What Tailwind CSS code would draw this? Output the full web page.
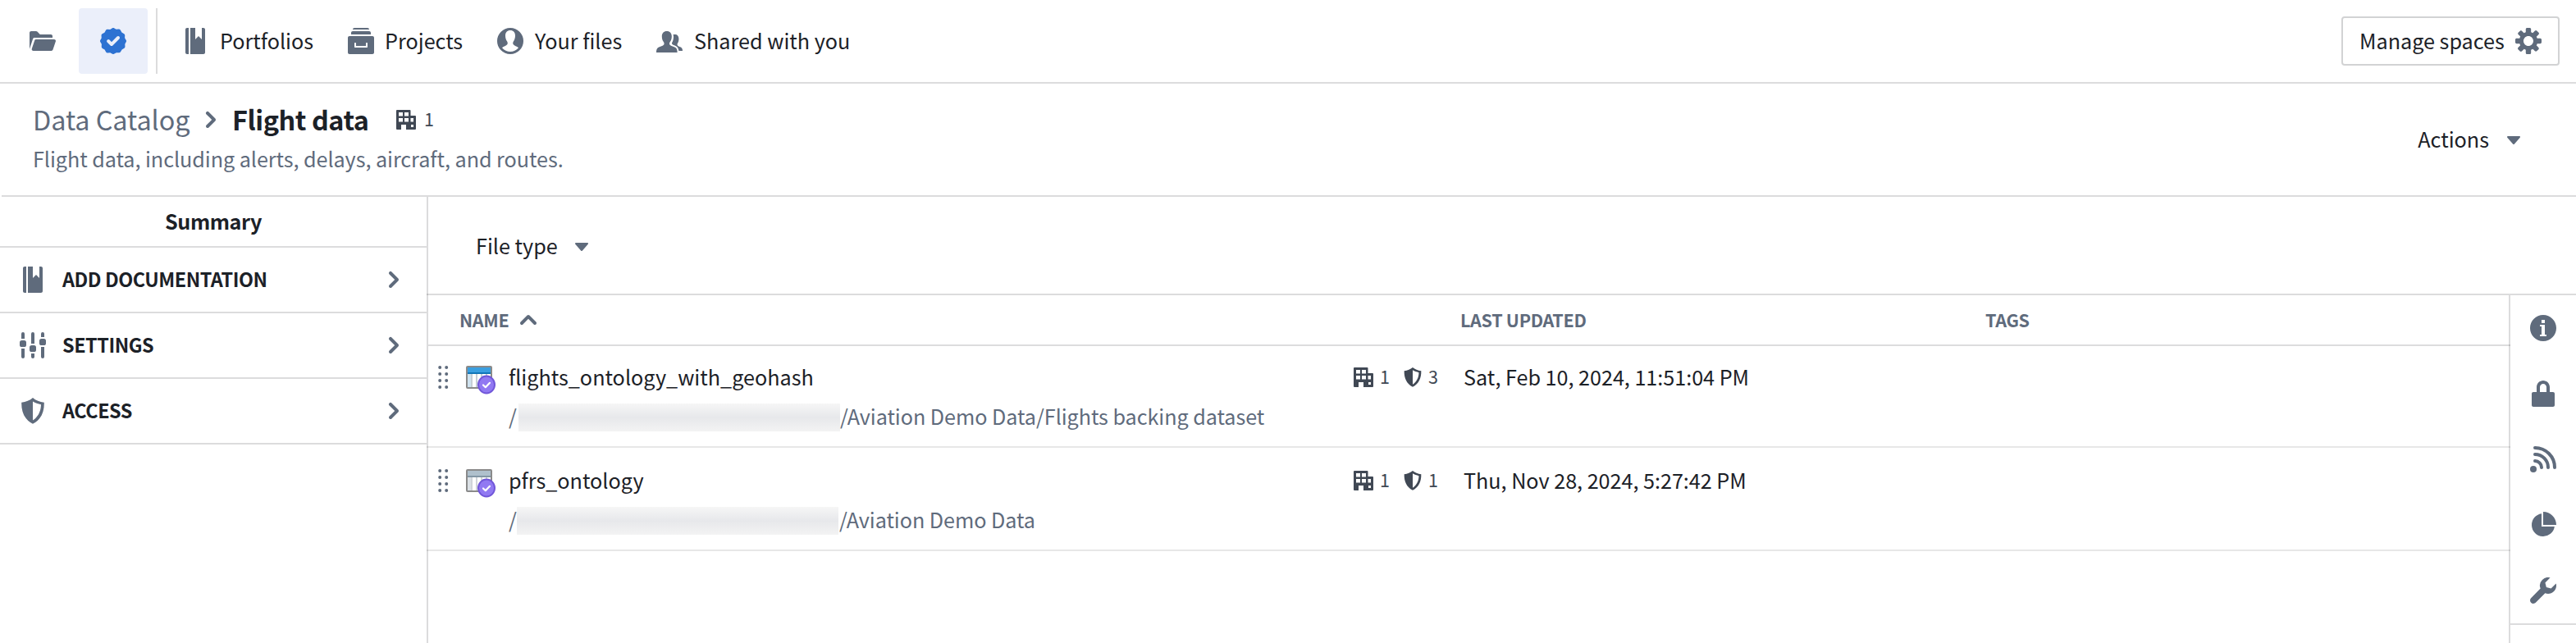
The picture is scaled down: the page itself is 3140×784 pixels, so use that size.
<!DOCTYPE html>
<html lang="en">
  <head>
    <meta charset="UTF-8" />
    <meta name="viewport" content="width=device-width, initial-scale=1.0" />
    <title>Flight data - Data Catalog</title>
    <script src="https://cdn.jsdelivr.net/npm/@tailwindcss/browser@4"></script>
  </head>
  <body
    class="bg-white text-[#1c2127] font-['Noto_Sans_CJK_SC','Noto_Sans',sans-serif] text-[25.2px] leading-8 whitespace-nowrap"
  >
    <!-- Shared icons -->
    <svg class="hidden">
      <symbol id="book" viewBox="0 0 16 16">
        <path d="M2 1v14c0 .55.45 1 1 1h1V0H3c-.55 0-1 .45-1 1zm11-1h-1v7l-2-2-2 2V0H5v16h8c.55 0 1-.45 1-1V1c0-.55-.45-1-1-1z" />
      </symbol>
      <symbol id="chevron-right" viewBox="0 0 16 16">
        <path d="M10.71 7.29l-4-4a1.003 1.003 0 00-1.42 1.42L8.59 8 5.3 11.29c-.19.18-.3.43-.3.71a1.003 1.003 0 001.71.71l4-4c.18-.18.29-.43.29-.71 0-.28-.11-.53-.29-.71z" />
      </symbol>
      <symbol id="caret-down" viewBox="0 0 16 16">
        <path d="M12 6.5c0-.28-.22-.5-.5-.5h-7a.495.495 0 00-.37.83l3.5 4c.09.1.22.17.37.17s.28-.07.37-.17l3.5-4c.08-.09.13-.2.13-.33z" />
      </symbol>
      <symbol id="shield" viewBox="0 0 16 16">
        <path fill-rule="evenodd" d="M8 0C6.2 1.6 3.8 2.5 1.1 2.9 1 8.8 3 13.3 8 15.9c5-2.6 7-7.1 6.9-13C12.2 2.5 9.8 1.6 8 0zm0 2.2c1.5.9 3.2 1.5 5 1.9-.1 4.2-1.7 7.4-5 9.7z" />
      </symbol>
      <symbol id="office" viewBox="0 0 24 24">
        <path fill-rule="evenodd" d="M1 0h15.500a1 1 0 011 1v6H23a1 1 0 011 1v15a1 1 0 01-1 1H12v-6H6v6H1a1 1 0 01-1-1V1a1 1 0 011-1zM3 3v4.500h5V3zm7 0v4.500h5V3zM3 10v4.500h5V10zm7 0v4.500h5V10zm7.500 0v4.500H21V10zm.5 8v3h3v-3z" />
      </symbol>
      <symbol id="drag" viewBox="0 0 16 32">
        <circle cx="4.200" cy="4" r="2" /><circle cx="12.200" cy="4" r="2" />
        <circle cx="4.200" cy="12" r="2" /><circle cx="12.200" cy="12" r="2" />
        <circle cx="4.200" cy="20" r="2" /><circle cx="12.200" cy="20" r="2" />
        <circle cx="4.200" cy="28" r="2" /><circle cx="12.200" cy="28" r="2" />
      </symbol>
      <symbol id="verified" viewBox="0 0 22 24">
        <ellipse cx="11" cy="12" rx="10" ry="10.500" fill="#9179f2" stroke="#7157d9" stroke-width="2" />
        <path d="M7 12.500l2.800 2.700 5.200-5.400" fill="none" stroke="#fff" stroke-width="2.200" stroke-linecap="round" stroke-linejoin="round" />
      </symbol>
    </svg>

    <!-- Top bar -->
    <header class="flex items-center h-[102px] border-b-2 border-[#111418]/15 pl-9 pr-5">
      <svg class="size-8 fill-[#5f6b7c]" viewBox="0 0 16 16">
        <path d="M2.060 6.690c.14-.4.5-.69.94-.69h11V5c0-.55-.45-1-1-1H6.410l-1.700-1.710A.997.997 0 004 2H1c-.55 0-1 .45-1 1v9.840l2.050-6.150h.01zM16 8c0-.55-.45-1-1-1H4a.99.99 0 00-.94.69l-1.670 5A.997.997 0 002.330 14H13.300c.44 0 .82-.29.95-.7l1.670-5c.05-.1.08-.2.08-.3z" />
      </svg>
      <div class="flex items-center justify-center w-[84px] h-20 ml-7 rounded-sm bg-[#ebeffa]">
        <svg class="size-8 fill-[#2d72d2]" viewBox="0 0 16 16">
          <path d="M15.860 7.500l-.81-1.420.08-1.640c0-.38-.2-.71-.53-.87L13.190 2.700l-.84-1.430a1 1 0 00-.88-.52L9.800.88 8.500.13c-.3-.17-.7-.17-1 0L6.100.98 4.440.9c-.38 0-.72.21-.9.53l-.83 1.400-1.420.82c-.33.19-.52.54-.51.91l.08 1.630-.74 1.300c-.16.3-.16.69 0 .99l.82 1.420-.07 1.660c0 .37.2.72.52.9l1.400.85.82 1.410c.19.33.53.53.9.52l1.630-.08 1.370.75c.3.17.68.17.98 0l1.420-.82 1.650.07c.38 0 .72-.2.9-.52l.85-1.400 1.410-.83c.33-.19.52-.54.51-.91l-.08-1.640.73-1.360a.97.97 0 00-.02-1zM11.700 6.700l-4 4c-.18.19-.42.3-.7.3s-.53-.11-.71-.3l-2-2A1.003 1.003 0 015.710 7.300L7 8.580l3.290-3.290c.18-.18.43-.29.71-.29a1.003 1.003 0 01.7 1.700z" />
        </svg>
      </div>
      <div class="w-0.5 h-20 ml-2.5 bg-[#111418]/15"></div>

      <nav class="flex items-center grow">
        <a class="flex items-center w-[202px] ml-[30px]">
          <svg class="size-8 fill-[#5f6b7c]"><use href="#book" /></svg>
          <span class="ml-3.5 -mt-0.5">Portfolios</span>
        </a>
        <a class="flex items-center w-[182px]">
          <svg class="size-8 fill-[#5f6b7c]" viewBox="0 0 16 16">
            <path d="M14 3c0-.55-.45-1-1-1H3c-.55 0-1 .45-1 1v1h12V3zm-1-2c0-.55-.45-1-1-1H4c-.55 0-1 .45-1 1h10zm2 4H1c-.55 0-1 .45-1 1v9c0 .55.45 1 1 1h14c.55 0 1-.45 1-1V6c0-.55-.45-1-1-1zm-3 6.500c0 .28-.22.5-.5.5h-7c-.28 0-.5-.22-.5-.5v-2c0-.28.22-.5.5-.5s.5.22.5.5V11h6V9.500c0-.28.22-.5.5-.5s.5.22.5.5v2z" />
          </svg>
          <span class="ml-[13px] -mt-0.5">Projects</span>
        </a>
        <a class="flex items-center w-[194px]">
          <svg class="size-8 fill-[#5f6b7c]" viewBox="0 0 16 16">
            <path fill-rule="evenodd" d="M8 0a8 8 0 100 16A8 8 0 008 0zm0 1.500c-1.900 0-3 1.300-3 3.200 0 1.400.4 2.600 1 3.400.5.7.5 1.500.1 2-.5.8-2.200 1.100-3.100 2a6.500 6.500 0 0010 0c-.9-.9-2.600-1.200-3.100-2-.4-.5-.4-1.300.1-2 .6-.8 1-2 1-3.400 0-1.900-1.100-3.200-3-3.200z" />
          </svg>
          <span class="ml-3.5 -mt-0.5">Your files</span>
        </a>
        <a class="flex items-center">
          <svg class="size-8 fill-[#5f6b7c]" viewBox="0 0 16 16">
            <path d="M6.400 2c-1.900 0-3 1.300-3 3.100 0 1.500.4 2.700 1 3.400.5.6.5 1.400.1 1.900-.6.8-2.600 1-3.400 1.600C.3 12.500 0 13.600 0 15h12.800c0-1.400-.3-2.500-1.100-3-.8-.6-2.800-.8-3.400-1.600-.4-.5-.4-1.300.1-1.900.6-.7 1-1.900 1-3.400C9.400 3.300 8.300 2 6.400 2zm3.900 2c.2.800.3 1.600.1 2.600-.1.900-.4 1.700-.8 2.300-.2.4-.1.9.3 1.200.8.500 2 .7 2.800 1.500.5.5.8 1.300 1 2.400H16c0-1-.3-1.700-.9-2.100-.7-.5-1.700-.6-2.100-1.200-.3-.4-.3-.9 0-1.300.4-.5.7-1.500.7-2.600C13.700 5 12.800 4 11.300 4z" />
          </svg>
          <span class="ml-3.5 -mt-0.5">Shared with you</span>
        </a>
      </nav>

      <button class="flex items-center justify-between w-[266px] h-[60px] pl-5 pr-5 border-2 border-[#d2d3d4] rounded-sm">
        <span class="-mt-0.5">Manage spaces</span>
        <svg class="size-8 fill-[#5f6b7c]" viewBox="0 0 16 16">
          <path d="M15.190 6.390h-1.850c-.11-.37-.27-.71-.45-1.040l1.360-1.360c.31-.31.31-.82 0-1.130l-1.130-1.130a.803.803 0 00-1.130 0l-1.360 1.360c-.33-.17-.67-.33-1.040-.44V.79c0-.44-.36-.8-.8-.8h-1.600c-.44 0-.8.36-.8.8v1.860c-.39.12-.75.28-1.100.47l-1.300-1.300c-.3-.3-.79-.3-1.090 0L1.820 2.910c-.3.3-.3.79 0 1.090l1.300 1.300c-.2.34-.36.7-.48 1.090H.79c-.44 0-.8.36-.8.8v1.600c0 .44.36.8.8.8h1.850c.11.37.27.71.45 1.040l-1.360 1.360c-.31.31-.31.82 0 1.130l1.130 1.130c.31.31.82.31 1.130 0l1.360-1.360c.33.18.67.33 1.040.44v1.860c0 .44.36.8.8.8h1.600c.44 0 .8-.36.8-.8v-1.860c.39-.12.75-.28 1.100-.47l1.300 1.300c.3.3.79.3 1.090 0l1.090-1.090c.3-.3.3-.79 0-1.090l-1.300-1.300c.19-.35.36-.71.48-1.100h1.850c.44 0 .8-.36.8-.8v-1.600a.816.816 0 00-.81-.79zm-7.200 4.600c-1.660 0-3-1.340-3-3s1.340-3 3-3 3 1.340 3 3-1.340 3-3 3z" />
        </svg>
      </button>
    </header>

    <!-- Breadcrumbs -->
    <section class="flex justify-between h-[138px] ml-0.5 pl-[38px] pr-[60px] border-b-2 border-[#111418]/15 text-[#5f6b7c]">
      <div class="pt-5">
        <div class="flex items-center h-12 text-[32.4px] leading-[44px]">
          <span class="w-[201px] -mt-[3px] tracking-[-0.05px]">Data Catalog</span>
          <svg class="size-8 fill-[#5f6b7c]"><use href="#chevron-right" /></svg>
          <span class="w-[200px] ml-2.5 -mt-[3px] font-semibold tracking-[-0.45px] text-[#1c2127]">Flight data</span>
          <svg class="size-6 fill-[#404854]"><use href="#office" /></svg>
          <span class="ml-2.5 -mt-0.5 text-[21.6px] text-[#404854]">1</span>
        </div>
        <p class="mt-[7px] tracking-[-0.06px]">Flight data, including alerts, delays, aircraft, and routes.</p>
      </div>
      <button class="flex items-center self-center mt-0.5 text-[#1c2127]">
        <span class="-mt-1">Actions</span>
        <svg class="size-8 ml-3.5 -mt-0.5 fill-[#5f6b7c]"><use href="#caret-down" /></svg>
      </button>
    </section>

    <div class="flex h-[544px]">
      <!-- Sidebar -->
      <aside class="w-[522px] shrink-0 border-r-2 border-[#111418]/15">
        <div class="h-[62px] pt-[13px] border-b-2 border-[#111418]/15 text-center font-semibold tracking-[-0.45px]">Summary</div>
        <div class="flex items-center h-20 px-6 border-b-2 border-[#111418]/15">
          <svg class="size-8 fill-[#5f6b7c]"><use href="#book" /></svg>
          <span class="grow ml-5 -mt-0.5 text-[23.4px] font-semibold tracking-[-0.45px]">ADD DOCUMENTATION</span>
          <svg class="size-8 fill-[#5f6b7c]"><use href="#chevron-right" /></svg>
        </div>
        <div class="flex items-center h-20 px-6 border-b-2 border-[#111418]/15">
          <svg class="size-8 fill-[#5f6b7c]" viewBox="0 0 16 16">
            <path d="M3 1a1 1 0 00-2 0v3h2zM1 10v5a1 1 0 002 0v-5zM9 1a1 1 0 00-2 0v6h2zM7 13v2a1 1 0 002 0v-2zM15 1a1 1 0 00-2 0v2h2zM13 9v6a1 1 0 002 0V9z" />
            <rect y="5" width="4" height="4" rx="1.300" />
            <rect x="6" y="8" width="4" height="4" rx="1.300" />
            <rect x="12" y="4" width="4" height="4" rx="1.300" />
          </svg>
          <span class="grow ml-5 -mt-0.5 text-[23.4px] font-semibold tracking-[-0.45px]">SETTINGS</span>
          <svg class="size-8 fill-[#5f6b7c]"><use href="#chevron-right" /></svg>
        </div>
        <div class="flex items-center h-20 px-6 border-b-2 border-[#111418]/15">
          <svg class="size-8 fill-[#5f6b7c]"><use href="#shield" /></svg>
          <span class="grow ml-5 -mt-0.5 text-[23.4px] font-semibold tracking-[-0.45px]">ACCESS</span>
          <svg class="size-8 fill-[#5f6b7c]"><use href="#chevron-right" /></svg>
        </div>
      </aside>

      <main class="flex flex-col grow -ml-0.5">
        <!-- Filters -->
        <div class="flex items-center h-[120px] pl-[60px] border-b-2 border-[#111418]/15">
          <span>File type</span>
          <svg class="size-8 ml-[13px] mt-0.5 fill-[#5f6b7c]"><use href="#caret-down" /></svg>
        </div>

        <div class="flex grow">
          <!-- File table -->
          <div class="w-[2540px]">
            <div class="flex items-center h-[62px] ml-0.5 pl-[38px] border-b-2 border-[#111418]/15 text-[21.6px] font-semibold tracking-[-0.35px] text-[#5f6b7c]">
              <div class="flex items-center w-[1220px]">
                <span class="-mt-px">NAME</span>
                <svg class="size-8 ml-2 fill-[#5f6b7c]" viewBox="0 0 16 16">
                  <path d="M12.710 9.290l-4-4C8.530 5.110 8.280 5 8 5s-.53.11-.71.29l-4 4a1.003 1.003 0 001.420 1.420L8 7.410l3.290 3.290c.18.19.43.3.71.3a1.003 1.003 0 00.71-1.710z" />
                </svg>
              </div>
              <span class="w-[640px] -mt-px">LAST UPDATED</span>
              <span class="-mt-px">TAGS</span>
            </div>

            <div class="flex h-[126px] -mt-0.5 pt-6 pl-3 border-b-2 border-[#111418]/10">
              <svg class="w-4 h-8 fill-[#5f6b7c]"><use href="#drag" /></svg>
              <div class="relative w-[72px] pl-5">
                <svg class="w-8 h-7 mt-0.5" viewBox="0 0 32 28">
                  <rect x="1" y="1" width="30" height="26" rx="1" fill="#fff" stroke="#8a8a8a" stroke-width="2" />
                  <path d="M2 2h28v8H2z" fill="#3a9fe0" />
                  <path d="M2 8h28v2H2z" fill="#1276b8" />
                  <path d="M2 10h4v16H2z" fill="#cfe3f0" />
                  <path d="M6 10h2v16H6zM12 10h2v16h-2zM18 10h2v16h-2zM24 10h2v16h-2z" fill="#c5ced6" />
                </svg>
                <svg class="absolute left-[34px] top-[13px] w-[22px] h-6"><use href="#verified" /></svg>
              </div>
              <div class="w-[1030px] -mt-px">
                <div>flights_ontology_with_geohash</div>
                <div class="flex items-center h-8 mt-4 tracking-[-0.06px] text-[#5f6b7c]">
                  <span class="w-3">/</span>
                  <span class="w-[392px] h-[34px] mt-1 bg-linear-to-b from-[#f6f6f6] via-[#e7e8eb] to-[#f3f3f3]"></span>
                  <span>/Aviation Demo Data/Flights backing dataset</span>
                </div>
              </div>
              <div class="flex items-center h-8 w-[61px] text-[21.6px] text-[#404854]">
                <svg class="size-6 mr-2 fill-[#404854]"><use href="#office" /></svg>
                <span class="-mt-[3px]">1</span>
              </div>
              <div class="flex items-center h-8 w-[73px] text-[21.6px] text-[#404854]">
                <svg class="size-6 mr-[7px] -ml-px fill-[#404854]"><use href="#shield" /></svg>
                <span class="-mt-[3px]">3</span>
              </div>
              <span class="-mt-px tracking-[-0.03px]">Sat, Feb 10, 2024, 11:51:04 PM</span>
            </div>

            <div class="flex h-[126px] pt-6 pl-3 border-b-2 border-[#111418]/10">
              <svg class="w-4 h-8 fill-[#5f6b7c]"><use href="#drag" /></svg>
              <div class="relative w-[72px] pl-5">
                <svg class="w-8 h-7 mt-0.5" viewBox="0 0 32 28">
                  <rect x="1" y="1" width="30" height="26" rx="1" fill="#fff" stroke="#8a8a8a" stroke-width="2" />
                  <path d="M2 2h28v8H2z" fill="#afc0cc" />
                  <path d="M2 8h28v2H2z" fill="#8397a5" />
                  <path d="M2 10h4v16H2z" fill="#dbe1e6" />
                  <path d="M6 10h2v16H6zM12 10h2v16h-2zM18 10h2v16h-2zM24 10h2v16h-2z" fill="#d0d4d9" />
                </svg>
                <svg class="absolute left-[34px] top-[13px] w-[22px] h-6"><use href="#verified" /></svg>
              </div>
              <div class="w-[1030px] -mt-px">
                <div>pfrs_ontology</div>
                <div class="flex items-center h-8 mt-4 tracking-[-0.06px] text-[#5f6b7c]">
                  <span class="w-2.5">/</span>
                  <span class="w-[392px] h-[34px] mt-1 bg-linear-to-b from-[#f6f6f6] via-[#e7e8eb] to-[#f3f3f3]"></span>
                  <span class="ml-px">/Aviation Demo Data</span>
                </div>
              </div>
              <div class="flex items-center h-8 w-[61px] text-[21.6px] text-[#404854]">
                <svg class="size-6 mr-2 fill-[#404854]"><use href="#office" /></svg>
                <span class="-mt-[3px]">1</span>
              </div>
              <div class="flex items-center h-8 w-[73px] text-[21.6px] text-[#404854]">
                <svg class="size-6 mr-[7px] -ml-px fill-[#404854]"><use href="#shield" /></svg>
                <span class="-mt-[3px]">1</span>
              </div>
              <span class="-mt-px tracking-[-0.03px]">Thu, Nov 28, 2024, 5:27:42 PM</span>
            </div>
          </div>

          <!-- Right rail -->
          <div class="grow -ml-0.5 border-l-2 border-[#111418]/15">
            <div class="flex flex-col items-center gap-12 h-[402px] pt-6 border-b-2 border-[#111418]/15">
              <svg class="size-8 fill-[#5f6b7c]" viewBox="0 0 16 16">
                <path d="M8 0C3.580 0 0 3.580 0 8s3.580 8 8 8 8-3.580 8-8-3.580-8-8-8zM7 3h2v2H7V3zm3 10H6v-1h1V7H6V6h3v6h1v1z" />
              </svg>
              <svg class="size-8 fill-[#5f6b7c]" viewBox="0 0 16 16">
                <path d="M14 7h-2V4c0-2.210-1.790-4-4-4S4 1.790 4 4v3H2c-.55 0-1 .45-1 1v7c0 .55.45 1 1 1h12c.55 0 1-.45 1-1V8c0-.55-.45-1-1-1zM6 7V4c0-1.100.9-2 2-2s2 .9 2 2v3H6z" />
              </svg>
              <svg class="size-8 fill-none stroke-[#5f6b7c]" viewBox="0 0 16 16" stroke-width="2" stroke-linecap="round">
                <circle cx="2" cy="14" r="2" class="fill-[#5f6b7c] stroke-none" />
                <path d="M3 9a4 4 0 014 4M3 5a8 8 0 018 8M3 1a12 12 0 0112 12" />
              </svg>
              <svg class="size-8 fill-[#5f6b7c]" viewBox="0 0 16 16">
                <path d="M8 0v8h8c0-4.420-3.580-8-8-8zM7 1.070A7 7 0 1014.930 9H7z" />
              </svg>
              <svg class="size-8 fill-[#5f6b7c]" viewBox="0 0 16 16">
                <path d="M15.830 3.700l-3.060 3.050-2.840-.7-.7-2.830L12.290.16a5.004 5.004 0 00-4.830 1.290 4.967 4.967 0 00-1.120 5.360L.58 12.580c-.36.36-.58.86-.58 1.410 0 1.100.9 2 2 2 .55 0 1.050-.22 1.410-.59l5.770-5.770c1.790.69 3.910.33 5.350-1.120 1.320-1.300 1.740-3.150 1.300-4.810z" />
              </svg>
            </div>
          </div>
        </div>
      </main>
    </div>
  </body>
</html>
